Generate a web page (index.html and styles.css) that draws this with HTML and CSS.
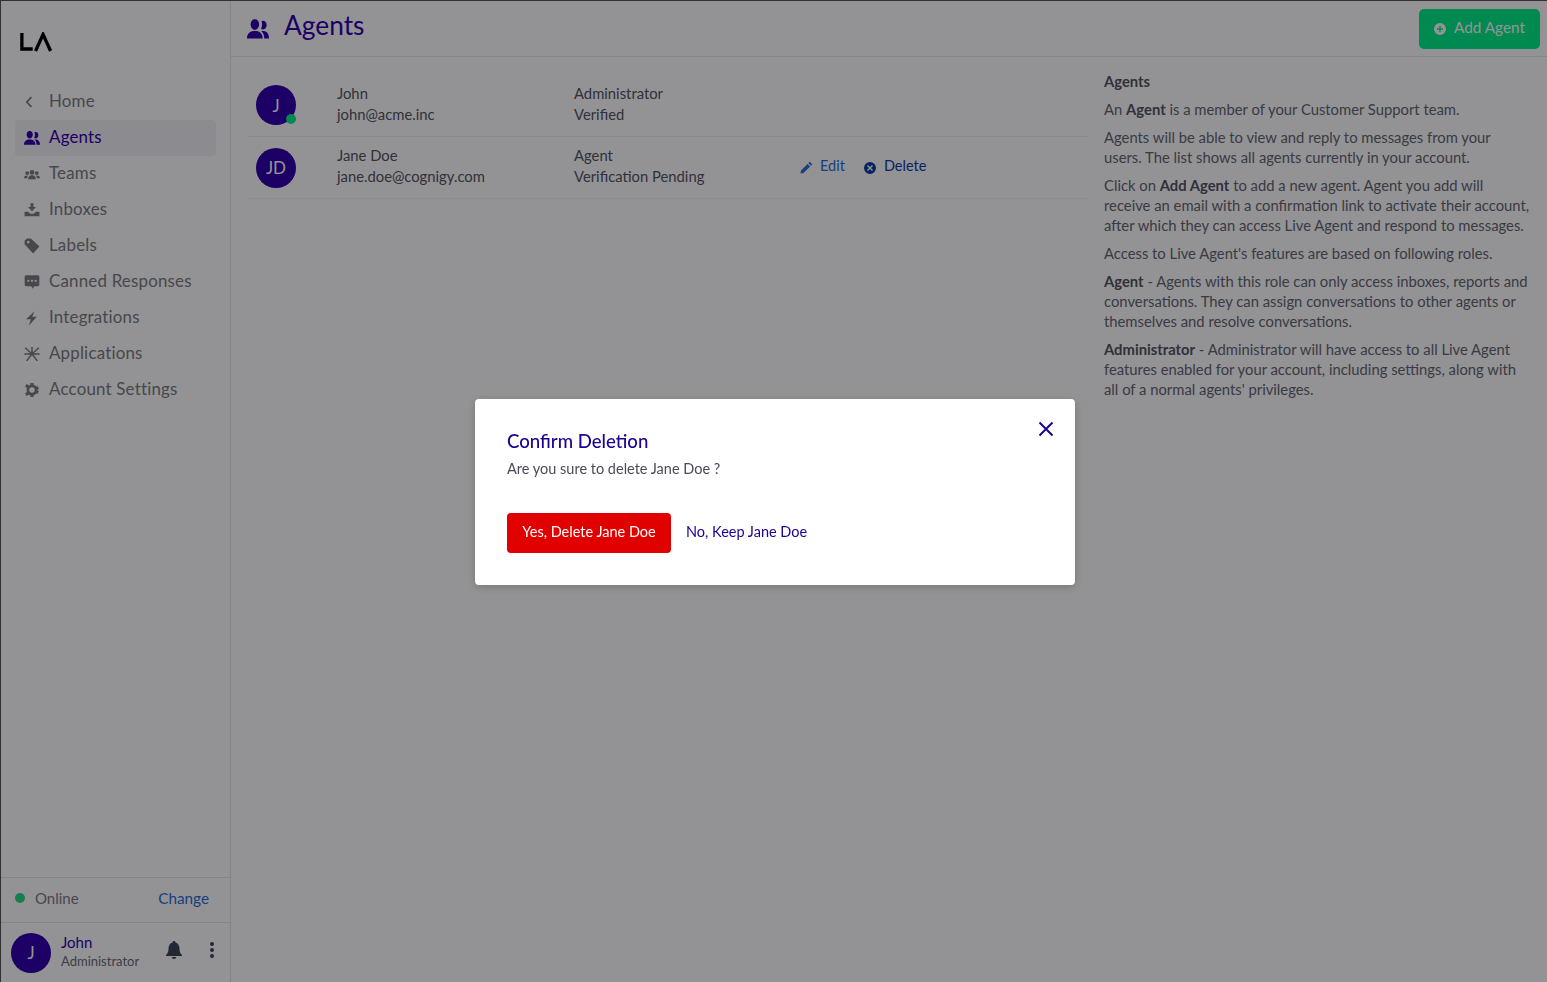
FILE: index.html
```html
<!DOCTYPE html>
<html lang="en">
<head>
  <meta charset="UTF-8">
  <title>Agents</title>
  <link rel="stylesheet" href="styles.css">
</head>
<body>

<div class="app">
  <!-- Sidebar -->
  <aside class="sidebar">
    <div class="logo">
      <svg width="32" height="20" viewBox="0 0 34 20" preserveAspectRatio="none"><path d="M2 1V17H13.500" fill="none" stroke="#000" stroke-width="3.500"/><path d="M16.500 19L24.500 2.500L32.500 19" fill="none" stroke="#000" stroke-width="3.500"/></svg>
    </div>

    <nav class="nav">
      <a class="nav-item"><svg class="nav-icon" viewBox="0 0 14 14"><path d="M6.500 2.800L2.500 7L6.500 11.200" fill="none" stroke="currentColor" stroke-width="1.500"/></svg>Home</a>
      <a class="nav-item active"><svg class="nav-icon" viewBox="0 0 14 14"><use href="#people"/></svg>Agents</a>
      <a class="nav-item"><svg class="nav-icon" viewBox="0 0 14 14"><path d="M7 3.500a1.900 1.900 0 1 1 0 4.200A1.900 1.900 0 0 1 7 3.500zM2.800 4.500a1.500 1.500 0 1 1 0 3.300 1.500 1.500 0 0 1 0-3.300zM11.200 4.500a1.500 1.500 0 1 1 0 3.300 1.500 1.500 0 0 1 0-3.300zM3.600 11.500c0-2.200 1.300-3.400 3.400-3.400s3.400 1.200 3.400 3.400zM0 10.800c0-1.500.9-2.400 2.600-2.400.4 0 .6 0 .8.100-.5.600-.7 1.300-.7 2.300zM14 10.800c0-1.500-.9-2.400-2.600-2.400-.4 0-.6 0-.8.100.5.600.7 1.300.7 2.300z" fill="currentColor"/></svg>Teams</a>
      <a class="nav-item"><svg class="nav-icon" viewBox="0 0 14 14"><path d="M5.700 1h2.600v3.400h2.200L7 8 3.500 4.400h2.200zM.5 8.500h3L5.500 10.300h3l2-1.800h3v4H.5z" fill="currentColor"/></svg>Inboxes</a>
      <a class="nav-item"><svg class="nav-icon" viewBox="0 0 14 14"><path d="M.5 5.500V2.500L2.500.5H6L13.500 7.500 8 13.500zM3.700 2.400a1.200 1.200 0 1 0 .01 0z" fill="currentColor" fill-rule="evenodd"/></svg>Labels</a>
      <a class="nav-item"><svg class="nav-icon" viewBox="0 0 14 14"><path d="M2 1.200h10c.9 0 1.400.5 1.400 1.300v7c0 .8-.5 1.300-1.400 1.300H9L7.700 13 6.400 10.800H2c-.9 0-1.400-.5-1.400-1.300v-7C.6 1.700 1.100 1.200 2 1.200zM3.800 5a1 1 0 1 0 0 2 1 1 0 0 0 0-2zM7 5a1 1 0 1 0 0 2 1 1 0 0 0 0-2zM10.200 5a1 1 0 1 0 0 2 1 1 0 0 0 0-2z" fill="currentColor" fill-rule="evenodd"/></svg>Canned Responses</a>
      <a class="nav-item"><svg class="nav-icon" viewBox="0 0 14 14"><path d="M9.200 1L1.800 8.200H6L4.300 13.500 11.200 6H7.200z" fill="currentColor"/></svg>Integrations</a>
      <a class="nav-item"><svg class="nav-icon" viewBox="0 0 14 14"><path d="M7 .8V6.500M7 7L1 1.500M7 7L13 1.500M.3 7H13.700M7 7L2.300 13M7 7L11.700 13" fill="none" stroke="currentColor" stroke-width="1.300"/></svg>Applications</a>
      <a class="nav-item"><svg class="nav-icon" viewBox="0 0 14 14"><circle cx="7" cy="7" r="3.600" fill="none" stroke="currentColor" stroke-width="2.400"/><path d="M5.600 .8h2.800v2.400H5.600zM5.600 10.800h2.800v2.400H5.600zM.9 4.200l1.400-2.400 2.100 1.200-1.400 2.400zM9.600 9.200l1.400-2.400 2.100 1.200-1.400 2.400zM.9 9.800l1.400 2.400 2.100-1.200-1.400-2.400zM9.600 4.800l1.400 2.400 2.100-1.200-1.400-2.400z" fill="currentColor"/></svg>Account Settings</a>
    </nav>

    <div class="status-bar">
      <span class="status-dot"></span>
      <span class="status-text">Online</span>
      <a class="status-change">Change</a>
    </div>

    <div class="profile">
      <div class="avatar">J</div>
      <div class="profile-info">
        <div class="profile-name">John</div>
        <div class="profile-role">Administrator</div>
      </div>
      <svg class="bell" width="20" height="20" viewBox="0 0 20 20"><path d="M10 1c1 0 1.500.6 1.500 1.500C14.200 3.200 15.500 5.500 15.500 8.500c0 3.500.8 5 2.500 6.500v1H2v-1c1.700-1.500 2.500-3 2.500-6.500C4.500 5.500 5.800 3.200 8.500 2.500 8.500 1.600 9 1 10 1zM7.800 17h4.400c0 1.300-1 2-2.200 2s-2.200-.7-2.200-2z" fill="currentColor"/></svg>
      <div class="dots"><span></span><span></span><span></span></div>
    </div>
  </aside>

  <!-- Main -->
  <main class="main">
    <header class="topbar">
      <svg class="title-icon" viewBox="0 0 14 14"><use href="#people"/></svg>
      <h1>Agents</h1>
      <button class="add-btn">
        <svg width="14" height="14" viewBox="0 0 14 14"><path d="M7 1a6 6 0 1 1 0 12A6 6 0 0 1 7 1zM6.300 4v2.300H4v1.400h2.300V10h1.400V7.700H10V6.300H7.700V4z" fill="currentColor" fill-rule="evenodd"/></svg>
        Add Agent
      </button>
    </header>

    <div class="content">
      <section class="agents">
        <div class="agent-row">
          <div class="avatar">J<span class="online-dot"></span></div>
          <div class="cell"><div>John</div><div>john@acme.inc</div></div>
          <div class="cell"><div>Administrator</div><div>Verified</div></div>
          <div></div>
        </div>
        <div class="agent-row">
          <div class="avatar">JD</div>
          <div class="cell"><div>Jane Doe</div><div>jane.doe@cognigy.com</div></div>
          <div class="cell"><div>Agent</div><div>Verification Pending</div></div>
          <div class="actions">
            <a class="edit"><svg width="13" height="13" viewBox="0 0 13 13"><path d="M9.700.7l2.600 2.600-1.400 1.400-2.600-2.600zM7.500 2.900l2.600 2.600L3.500 12 .5 12.500 1 9.500z" fill="currentColor"/></svg>Edit</a>
            <a class="delete"><svg width="14" height="14" viewBox="0 0 14 14"><path d="M7 1a6 6 0 1 1 0 12A6 6 0 0 1 7 1zM5 4L4 5l2 2-2 2 1 1 2-2 2 2 1-1-2-2 2-2-1-1-2 2z" fill="currentColor" fill-rule="evenodd"/></svg>Delete</a>
          </div>
        </div>
      </section>

      <section class="help">
        <p class="help-title"><b>Agents</b></p>
        <p>An <b>Agent</b> is a member of your Customer Support team.</p>
        <p>Agents will be able to view and reply to messages from your users. The list shows all agents currently in your account.</p>
        <p>Click on <b>Add Agent</b> to add a new agent. Agent you add will receive an email with a confirmation link to activate their account, after which they can access Live Agent and respond to messages.</p>
        <p>Access to Live Agent's features are based on following roles.</p>
        <p><b>Agent</b> - Agents with this role can only access inboxes, reports and conversations. They can assign conversations to other agents or themselves and resolve conversations.</p>
        <p><b>Administrator</b> - Administrator will have access to all Live Agent features enabled for your account, including settings, along with all of a normal agents' privileges.</p>
      </section>
    </div>
  </main>
</div>

<!-- Delete Modal -->
<div class="overlay">
  <div class="modal">
    <svg class="modal-close" width="16" height="16" viewBox="0 0 16 16"><path d="M1.500 1.500L14.500 14.500M14.500 1.500L1.500 14.500" fill="none" stroke="currentColor" stroke-width="2"/></svg>
    <h2>Confirm Deletion</h2>
    <p>Are you sure to delete Jane Doe ?</p>
    <div class="modal-actions">
      <button class="btn-danger">Yes, Delete Jane Doe</button>
      <button class="btn-link">No, Keep Jane Doe</button>
    </div>
  </div>
</div>

<svg class="defs" width="0" height="0">
  <symbol id="people" viewBox="0 0 14 14">
    <path d="M5 .8c1.600 0 2.700 1.300 2.700 3.200S6.600 7.500 5 7.500 2.300 5.900 2.300 4 3.400.8 5 .8zM0 13c0-3 1.800-4.700 5-4.700s5 1.700 5 4.700zM10.200 1.800c1.300 0 2.300 1.100 2.300 2.700S11.500 7.300 10.200 7.300c-.5 0-.9-.1-1.300-.4.5-.8.700-1.800.7-2.900 0-.7-.1-1.300-.4-1.800.3-.3.600-.4 1-.4zM11 13c0-2.100-.7-3.700-1.900-4.600.3 0 .6-.1.900-.1 2.600 0 4 1.700 4 4.700z" fill="currentColor"/>
  </symbol>
</svg>

</body>
</html>
```
FILE: styles.css
```css
* {
  box-sizing: border-box;
}
body {
  margin: 0;
  font-family: Lato, "Noto Sans", sans-serif;
  font-size: 15px;
  color: #7b7b85;
  background: #fff;
}
.defs {
  position: absolute;
}
.app {
  display: flex;
  height: 982px;
  border-top: 1px solid #555;
  border-left: 1px solid #555;
}

/* Sidebar */
.sidebar {
  width: 230px;
  flex-shrink: 0;
  display: flex;
  flex-direction: column;
  border-right: 1px solid #e4e4ec;
}
.logo {
  height: 83px;
  padding: 31px 0 0 19px;
}
.nav {
  flex: 1;
  padding: 0 14px;
}
.nav-item {
  display: flex;
  align-items: center;
  height: 36px;
  padding: 0 0 3px 9px;
  font-size: 16.9px;
  letter-spacing: .2px;
  color: #7c7c82;
  border-radius: 4px;
}
.nav-item.active {
  color: #3200ac;
  background: #f1f1f6;
}
.nav-icon {
  width: 16px;
  height: 16px;
  margin: 3px 9px 0 0;
}
.status-bar {
  display: flex;
  align-items: center;
  height: 46px;
  padding: 0 21px 5px 14px;
  border-top: 1px solid #e4e4ec;
  border-bottom: 1px solid #e4e4ec;
  font-size: 15px;
}
.status-dot {
  width: 10px;
  height: 10px;
  border-radius: 50%;
  background: #2ad882;
  margin-right: 10px;
}
.status-text {
  flex: 1;
  color: #7c7c82;
}
.status-change {
  color: #2a6fd6;
  font-size: 15.300px;
}
.profile {
  display: flex;
  align-items: center;
  height: 59px;
  padding: 0 10px;
}
.avatar {
  position: relative;
  width: 40px;
  height: 40px;
  flex-shrink: 0;
  display: flex;
  align-items: center;
  justify-content: center;
  border-radius: 50%;
  background: #3200ac;
  color: #fff;
  font-size: 17px;
}
.profile-info {
  flex: 1;
  margin: 0 0 4px 10px;
}
.profile-name {
  font-size: 15px;
  color: #3200ac;
}
.profile-role {
  margin-top: 2px;
  font-size: 13px;
  color: #6b6b75;
}
.bell {
  color: #3c4858;
  margin: 0 26px 5px 0;
}
.dots {
  display: flex;
  flex-direction: column;
  gap: 2px;
  margin: 0 6px 5px 0;
}
.dots span {
  width: 4px;
  height: 4px;
  border-radius: 50%;
  background: #3c4858;
}

/* Main */
.main {
  flex: 1;
  min-width: 0;
}
.topbar {
  display: flex;
  align-items: center;
  height: 56px;
  padding: 0 7px 6px 16px;
  border-bottom: 1px solid #e4e4ec;
}
.title-icon {
  width: 22px;
  height: 22px;
  color: #3200ac;
  margin-top: 6px;
}
h1 {
  flex: 1;
  margin: 0 0 2px 15px;
  font-size: 26.300px;
  font-weight: 400;
  color: #3200ac;
}
.add-btn {
  display: flex;
  align-items: center;
  gap: 7px;
  width: 121px;
  height: 40px;
  margin-top: 6px;
  padding: 0 0 3px 14px;
  border: none;
  border-radius: 5px;
  font: inherit;
  font-size: 15.300px;
  color: #fff;
  background: #00f08c;
}
.add-btn svg {
  margin-top: 3px;
}
.content {
  display: flex;
  padding-top: 8px;
}
.agents {
  width: 857px;
  margin-right: 16px;
  padding: 9px 0 0 16px;
  flex-shrink: 0;
}
.agent-row {
  display: grid;
  grid-template-columns: 81px 237px 226px 1fr;
  align-items: center;
  height: 63px;
  padding-left: 9px;
  border-bottom: 1px solid #f2f2f5;
}
.agent-row:last-child {
  height: 62px;
}
.cell {
  display: flex;
  flex-direction: column;
  gap: 3px;
  padding-bottom: 4px;
  line-height: 18px;
  font-size: 14.800px;
  color: #55555f;
}
.online-dot {
  position: absolute;
  right: 0;
  bottom: 1px;
  width: 10px;
  height: 10px;
  border-radius: 50%;
  background: #00f08c;
}
.actions {
  display: flex;
  align-items: center;
  gap: 18px;
  padding-bottom: 5px;
  font-size: 14.500px;
}
.actions a {
  display: flex;
  align-items: center;
  gap: 7px;
}
.actions svg {
  margin-top: 5px;
}
.edit {
  color: #2a6fd6;
}
.delete {
  color: #0c3ba4;
}
.help {
  width: 427px;
  padding-top: 6px;
  font-size: 14.800px;
  line-height: 20px;
  color: #666670;
}
.help p {
  margin: 0 0 8px;
}
.help b {
  color: #55555f;
}

/* Modal */
.overlay {
  position: fixed;
  inset: 0;
  display: flex;
  align-items: center;
  justify-content: center;
  padding: 2px 0 0 3px;
  background: rgba(0, 0, 5, .425);
}
.modal {
  position: relative;
  width: 600px;
  height: 186px;
  padding: 31px 32px;
  border-radius: 4px;
  background: #fff;
  box-shadow: 0 2px 8px rgba(0, 0, 0, .2);
}
.modal-close {
  position: absolute;
  top: 22px;
  right: 21px;
  color: #1f0094;
}
.modal h2 {
  margin: 0;
  font-size: 18.600px;
  font-weight: 500;
  color: #1f0094;
}
.modal p {
  margin: 8px 0 0;
  font-size: 14.500px;
  color: #4a4a5a;
}
.modal-actions {
  display: flex;
  align-items: center;
  margin-top: 36px;
  font-size: 14.500px;
}
.btn-danger {
  width: 164px;
  height: 40px;
  padding: 0 0 4px;
  border: none;
  border-radius: 4px;
  font: inherit;
  color: #fff;
  background: #e00000;
}
.btn-link {
  height: 40px;
  margin-left: 15px;
  padding: 0 0 4px;
  border: none;
  font: inherit;
  color: #1f0094;
  background: none;
}
```
